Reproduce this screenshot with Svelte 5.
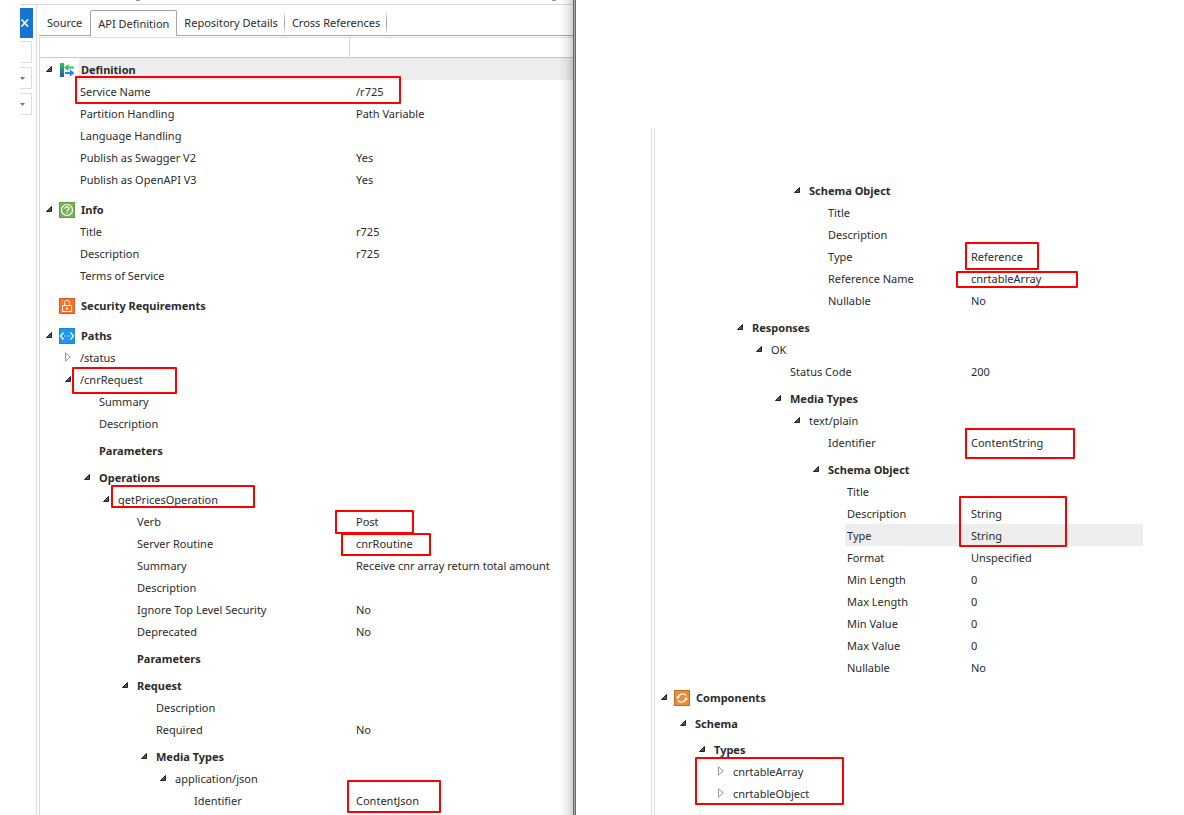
<script>
  // row: [level, name, value, options]
  const definitionRows = [
    [0, 'Definition', '', { open: true, bold: true, icon: 'api', selected: true }],
    [1, 'Service Name', '/r725'],
    [1, 'Partition Handling', 'Path Variable'],
    [1, 'Language Handling', ''],
    [1, 'Publish as Swagger V2', 'Yes'],
    [1, 'Publish as OpenAPI V3', 'Yes'],
    [0, 'Info', '', { open: true, bold: true, icon: 'info', gap: 8 }],
    [1, 'Title', 'r725'],
    [1, 'Description', 'r725'],
    [1, 'Terms of Service', ''],
    [0, 'Security Requirements', '', { bold: true, icon: 'lock', gap: 8 }],
    [0, 'Paths', '', { open: true, bold: true, icon: 'paths', gap: 8 }],
    [1, '/status', '', { open: false }],
    [1, '/cnrRequest', '', { open: true }],
    [2, 'Summary', ''],
    [2, 'Description', ''],
    [2, 'Parameters', '', { bold: true, gap: 5 }],
    [2, 'Operations', '', { open: true, bold: true, gap: 5 }],
    [3, 'getPricesOperation', '', { open: true }],
    [4, 'Verb', 'Post'],
    [4, 'Server Routine', 'cnrRoutine'],
    [4, 'Summary', 'Receive cnr array return total amount'],
    [4, 'Description', ''],
    [4, 'Ignore Top Level Security', 'No'],
    [4, 'Deprecated', 'No'],
    [4, 'Parameters', '', { bold: true, gap: 5 }],
    [4, 'Request', '', { open: true, bold: true, gap: 5 }],
    [5, 'Description', ''],
    [5, 'Required', 'No'],
    [5, 'Media Types', '', { open: true, bold: true, gap: 5 }],
    [6, 'application/json', '', { open: true }],
    [7, 'Identifier', 'ContentJson'],
  ];

  const schemaRows = [
    [7, 'Schema Object', '', { open: true, bold: true }],
    [8, 'Title', ''],
    [8, 'Description', ''],
    [8, 'Type', 'Reference'],
    [8, 'Reference Name', 'cnrtableArray'],
    [8, 'Nullable', 'No'],
    [4, 'Responses', '', { open: true, bold: true, gap: 5 }],
    [5, 'OK', '', { open: true }],
    [6, 'Status Code', '200'],
    [6, 'Media Types', '', { open: true, bold: true, gap: 5 }],
    [7, 'text/plain', '', { open: true }],
    [8, 'Identifier', 'ContentString'],
    [8, 'Schema Object', '', { open: true, bold: true, gap: 5 }],
    [9, 'Title', ''],
    [9, 'Description', 'String'],
    [9, 'Type', 'String', { selected: true }],
    [9, 'Format', 'Unspecified'],
    [9, 'Min Length', '0'],
    [9, 'Max Length', '0'],
    [9, 'Min Value', '0'],
    [9, 'Max Value', '0'],
    [9, 'Nullable', 'No'],
    [0, 'Components', '', { open: true, bold: true, icon: 'components', gap: 8 }],
    [1, 'Schema', '', { open: true, bold: true, gap: 4 }],
    [2, 'Types', '', { open: true, bold: true, gap: 4 }],
    [3, 'cnrtableArray', '', { open: false }],
    [3, 'cnrtableObject', '', { open: false }],
    [2, '', '', { open: false, gap: 4 }],
  ];

  // highlight frames, relative to their tree: [left, top, width, height]
  const definitionMarks = [
    [35, 18, 326, 28],
    [32, 309, 105, 27],
    [71, 427, 144, 23],
    [295, 452, 79, 24],
    [301, 475, 90, 23],
    [307, 722, 94, 33],
  ];
  const schemaMarks = [
    [310, 63, 74, 28],
    [301, 92, 122, 17],
    [310, 249, 110, 31],
    [304, 317, 108, 51],
    [40, 578, 149, 48],
  ];

  const tabs = ['Source', 'API Definition', 'Repository Details', 'Cross References'];
  let activeTab = 'API Definition';
</script>

<div class="page">
  <section class="pane editor">
    <div class="titlebar"><span></span><span></span></div>
    <div class="workspace">
      <aside class="sliver">
        <button class="close" aria-label="Close">
          <svg viewBox="0 0 9 8" width="9" height="8"><path d="M1.5 0.5L8 7.5M8 0.5L1.5 7.5" stroke="#fff" stroke-width="1.6" /></svg>
        </button>
        <input class="field" aria-label="Filter" />
        {#each ['Category', 'Type'] as name}
          <div class="combo">
            <select class="field" aria-label={name}><option></option></select>
            <svg viewBox="0 0 5 3" width="5" height="3"><path d="M0 0H5L2.5 3Z" fill="#777" /></svg>
          </div>
        {/each}
      </aside>

      <div class="document">
        <div class="tabs" role="tablist">
          {#each tabs as tab}
            <button class="tab" class:active={tab === activeTab} role="tab" aria-selected={tab === activeTab} on:click={() => (activeTab = tab)}>{tab}</button>
          {/each}
        </div>
        <div class="sheet">
          <div class="columns"><span></span><span></span></div>
          {@render tree(definitionRows, definitionMarks)}
        </div>
      </div>
    </div>
  </section>

  <section class="pane schema">
    <div class="document">
      <div class="sheet">
        {@render tree(schemaRows, schemaMarks)}
      </div>
    </div>
  </section>
</div>

{#snippet tree(rows, marks)}
  <div class="tree">
    <table>
      <colgroup><col class="name-col" /><col /></colgroup>
      <tbody>
        {#each rows as [level, name, value, opts = {}]}
          <tr class="gap-{opts.gap || 0}" class:bold={opts.bold} class:selected={opts.selected}>
            <th scope="row">
              <div class="name" style="padding-left: {5 + level * 19}px">
                <span class="slot">
                  {#if opts.open !== undefined}
                    <button class="twisty" aria-label="Toggle {name}" aria-expanded={opts.open}>
                      {#if opts.open}
                        <svg viewBox="0 0 8 8" width="8" height="8"><path d="M6.5 1.5V6.5H1.5Z" fill="#555" stroke="#222" /></svg>
                      {:else}
                        <svg viewBox="0 0 8 10" width="8" height="10"><path d="M1.5 0.8V9.2L6.2 5Z" fill="#fff" stroke="#999" /></svg>
                      {/if}
                    </button>
                  {/if}
                </span>
                {#if opts.icon}{@render icon(opts.icon)}{/if}
                <span class="label">{name}</span>
              </div>
            </th>
            <td><div class="value">{value}</div></td>
          </tr>
        {/each}
      </tbody>
    </table>
    {#each marks as [left, top, width, height]}
      <span class="mark" style="left: {left}px; top: {top}px; width: {width}px; height: {height}px"></span>
    {/each}
  </div>
{/snippet}

{#snippet icon(kind)}
  <svg class="icon" viewBox="0 0 16 16" width="16" height="16" aria-hidden="true">
    {#if kind === 'api'}
      <defs>
        <linearGradient id="bar" x1="0" y1="0" x2="0" y2="1">
          <stop offset="0" stop-color="#2cc160" />
          <stop offset="1" stop-color="#2c5aa8" />
        </linearGradient>
      </defs>
      <rect x="1" y="1" width="4" height="14" fill="url(#bar)" />
      <path d="M5 5.5L9.5 2V4.6H15V6.4H9.5V9Z" fill="#23cf5f" />
      <path d="M15.5 11L11 7.5V10.1H6V11.9H11V14.5Z" fill="#2088ee" />
    {:else if kind === 'info'}
      <rect x="0.5" y="0.5" width="15" height="15" fill="#7cb15a" stroke="#62a03c" />
      <circle cx="8" cy="8" r="5.5" fill="none" stroke="#fff" stroke-width="1.2" />
      <path d="M6 6.8C6 4.3 10 4.3 10 6.6C10 8 8 8 8 9.5M8 10.4V11.6" fill="none" stroke="#fff" stroke-width="1.2" />
    {:else if kind === 'lock'}
      <rect x="0.5" y="0.5" width="15" height="15" fill="#ff7029" stroke="#d95f20" />
      <path d="M3.5 7.5H12.5V13.5H3.5ZM5.5 7V4.5C5.5 1.8 10.5 1.8 10.5 4.5V7" fill="none" stroke="#fff" />
      <rect x="7" y="9.5" width="2" height="2" fill="#fff" />
    {:else if kind === 'paths'}
      <rect x="0.5" y="0.5" width="15" height="15" fill="#2196ee" stroke="#1d85d4" />
      <path d="M4.5 4.5L1.5 8L4.5 11.5M11.5 4.5L14.5 8L11.5 11.5" fill="none" stroke="#fff" stroke-width="1.3" />
      <path d="M5 7.5H6V8.5H5ZM7.5 7.5H8.5V8.5H7.5ZM10 7.5H11V8.5H10Z" fill="#fff" />
    {:else}
      <rect x="0.5" y="0.5" width="15" height="15" fill="#ee8a31" stroke="#bd7026" />
      <path d="M12 5.5C10 2.8 4.5 3.5 4 8M4 10.5C6 13.2 11.5 12.5 12 8" fill="none" stroke="#fff" stroke-width="1.3" />
      <path d="M2 6.5H6L4 9.5ZM14 9.5H10L12 6.5Z" fill="#fff" />
    {/if}
  </svg>
{/snippet}

<style>
  :global(body) {
    margin: 0;
    background: #fff;
  }

  .page {
    display: grid;
    grid-template-columns: minmax(0, 576fr) minmax(0, 608fr);
    grid-template-rows: minmax(0, 1fr);
    height: 100vh;
    overflow: hidden;
    font-family: 'Noto Sans', 'Open Sans', sans-serif;
    font-size: 11px;
    line-height: 24px;
    color: #2b2b2b;
  }

  .pane {
    position: relative;
    min-height: 0;
  }

  button {
    font: inherit;
    color: inherit;
    border: 0;
    padding: 0;
    background: none;
  }

  .editor {
    display: flex;
    flex-direction: column;
    padding-left: 20px;
    border-right: 1px solid #686870;
  }

  /* window edge: shadow fading into the green frame line */
  .editor::after {
    content: '';
    position: absolute;
    inset: 0 0 0 auto;
    width: 16px;
    box-sizing: border-box;
    border-right: 1px solid #aaa;
    background: linear-gradient(to right, rgba(0, 0, 0, 0), rgba(0, 0, 0, 0.06) 50%, rgba(0, 0, 0, 0.2));
    box-shadow: inset -1px 0 #259058;
    pointer-events: none;
  }

  .titlebar {
    display: flex;
    gap: 412px;
    height: 4px;
    padding-left: 116px;
    border-bottom: 1px solid #d9d9d9;
  }

  .titlebar span {
    width: 4px;
    height: 1px;
    background: #8c96aa;
  }

  .workspace {
    display: flex;
    flex: 1;
  }

  .sliver {
    display: flex;
    flex-direction: column;
    width: 13px;
    padding-top: 3px;
    margin-right: 3px;
  }

  .close {
    display: flex;
    align-items: center;
    height: 30px;
    margin-bottom: 3px;
    background: #1874d2;
  }

  .field {
    display: block;
    box-sizing: border-box;
    width: 12px;
    height: 22px;
    padding: 0;
    border: 1px solid #ddd;
    border-left: 0;
    border-radius: 0;
    background: #fff;
    appearance: none;
  }

  .combo {
    position: relative;
    margin-top: 4px;
  }

  .combo svg {
    position: absolute;
    left: 0;
    top: 10px;
  }

  .document {
    display: flex;
    flex-direction: column;
    flex: 1;
    min-width: 0;
    border-left: 1px solid #ddd;
  }

  .tabs {
    display: flex;
    box-sizing: border-box;
    height: 31px;
    padding-top: 5px;
    margin-left: 2px;
    background: linear-gradient(#a5a5aa, #a5a5aa) bottom / 100% 1px no-repeat;
  }

  .tab {
    position: relative;
    box-sizing: border-box;
    padding: 0 7px;
    white-space: nowrap;
  }

  .tab:first-child {
    padding: 0 8px;
  }

  .tab:not(.active):not(:first-child)::after {
    content: '';
    position: absolute;
    inset: 2px 0 2px auto;
    width: 1px;
    background: linear-gradient(#eee, #999, #eee);
  }

  .tab.active {
    border: 1px solid #a5a5aa;
    border-bottom: 0;
    border-radius: 2px 2px 0 0;
    background: #fff;
  }

  .sheet {
    flex: 1;
    margin: 1px 0 0 2px;
    border: 1px solid #ddd;
    border-width: 1px 0 0 1px;
  }

  .columns {
    display: flex;
    height: 19px;
    border-bottom: 1px solid #c8c8c8;
  }

  .columns span:first-child {
    width: 309px;
    border-right: 1px solid #d9d9d9;
  }

  .tree {
    position: relative;
  }

  table {
    width: 100%;
    table-layout: fixed;
    border-collapse: collapse;
  }

  .name-col {
    width: 310px;
  }

  th,
  td {
    padding: 0;
    font-weight: 400;
    text-align: left;
    white-space: nowrap;
  }

  .bold th {
    font-weight: 700;
  }

  .gap-4 > * {
    padding-top: 4px;
  }

  .gap-5 > * {
    padding-top: 5px;
  }

  .gap-8 > * {
    padding-top: 8px;
  }

  .name {
    display: flex;
    align-items: center;
    height: 22px;
  }

  .slot {
    display: flex;
    flex: none;
    width: 14px;
  }

  .twisty {
    display: flex;
  }

  .icon {
    flex: none;
    margin: 1px 4px 0 0;
  }

  .label {
    flex: 1;
    height: 22px;
    padding-left: 2px;
  }

  .value {
    height: 22px;
    padding-left: 6px;
  }

  .selected .label,
  .selected .value {
    background: #ededed;
  }

  .mark {
    position: absolute;
    box-sizing: border-box;
    border: 2px solid #fe0000;
    border-radius: 1px;
  }

  .schema {
    padding: 128px 41px 0 75px;
  }

  .schema .sheet {
    margin-top: 0;
    padding-top: 51px;
    border-top: 0;
  }
</style>
